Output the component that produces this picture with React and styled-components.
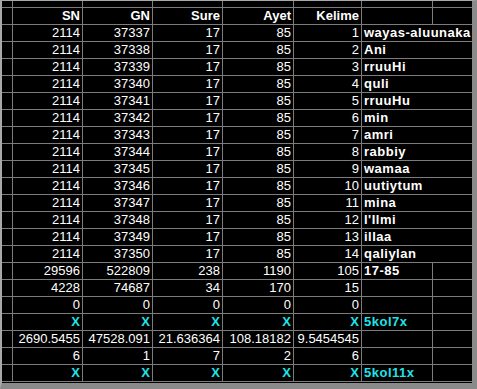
import React from 'react';
import styled, { createGlobalStyle } from 'styled-components';

const GlobalStyle = createGlobalStyle`
  html, body { margin: 0; padding: 0; background: #000; }
`;

const words = [
  'wayas-aluunaka', 'Ani', 'rruuHi', 'quli', 'rruuHu', 'min', 'amri',
  'rabbiy', 'wamaa', 'uutiytum', 'mina', "l'Ilmi", 'illaa', 'qaliylan',
];

const wordRows = words.map((w, i) => ({
  nums: ['2114', String(37337 + i), '17', '85', String(i + 1)],
  text: w,
  span: true,
}));

const footRows = [
  { nums: ['29596', '522809', '238', '1190', '105'], text: '17-85' },
  { nums: ['4228', '74687', '34', '170', '15'], text: '' },
  { nums: ['0', '0', '0', '0', '0'], text: '' },
  { nums: ['X', 'X', 'X', 'X', 'X'], text: '5kol7x', cyan: true },
  { nums: ['2690.5455', '47528.091', '21.636364', '108.18182', '9.5454545'], text: '' },
  { nums: ['6', '1', '7', '2', '6'], text: '' },
  { nums: ['X', 'X', 'X', 'X', 'X'], text: '5kol11x', cyan: true },
];

const headers = ['SN', 'GN', 'Sure', 'Ayet', 'Kelime'];

const Frame = styled.div`
  width: 477px;
  height: 389px;
  box-sizing: border-box;
  background: #000;
  border-left: 2px solid #a8a8a8;
  border-top: 1px solid #a8a8a8;
  border-right: 5px solid #8a8a8a;
  border-bottom: 6px solid #8a8a8a;
  overflow: hidden;
`;

const Sheet = styled.div`
  display: grid;
  grid-template-columns: 11px 70px 70px 70px 71px 68px 71px 40px;
  grid-template-rows: 7px repeat(22, 17px);
  font-family: "Liberation Sans", Arial, sans-serif;
  font-size: 13px;
  color: #fff;
`;

const Cell = styled.div`
  box-sizing: border-box;
  border-right: 1px solid #7c7c7c;
  border-bottom: 1px solid #7c7c7c;
  grid-column: ${p => (p.$span ? 'span 2' : 'auto')};
  display: flex;
  align-items: center;
  justify-content: ${p => (p.$left ? 'flex-start' : 'flex-end')};
  padding: ${p => (p.$left ? '0 0 0 2px' : '0 2px 0 0')};
  font-weight: ${p => (p.$bold ? 700 : 400)};
  letter-spacing: ${p => (p.$left ? '0.5px' : '0')};
  color: ${p => (p.$cyan ? '#1fe4e8' : '#fff')};
  white-space: nowrap;
  overflow: hidden;
  line-height: 16px;
`;

const Header = styled(Cell)`
  font-weight: 700;
  font-size: 13px;
`;

export default function App() {
  const rows = [...wordRows, ...footRows];
  return (
    <>
      <GlobalStyle />
      <Frame>
        <Sheet>
          {Array.from({ length: 8 }).map((_, i) => <Cell key={'t' + i} />)}
          <Cell />
          {headers.map(h => <Header key={h}>{h}</Header>)}
          <Cell />
          <Cell />
          {rows.map((r, ri) => (
            <React.Fragment key={ri}>
              <Cell />
              {r.nums.map((n, ci) => (
                <Cell key={ci} $cyan={r.cyan} $bold={r.cyan}>{n}</Cell>
              ))}
              <Cell $left $bold $span={r.span} $cyan={r.cyan}>{r.text}</Cell>
              {!r.span && <Cell />}
            </React.Fragment>
          ))}
        </Sheet>
      </Frame>
    </>
  );
}
